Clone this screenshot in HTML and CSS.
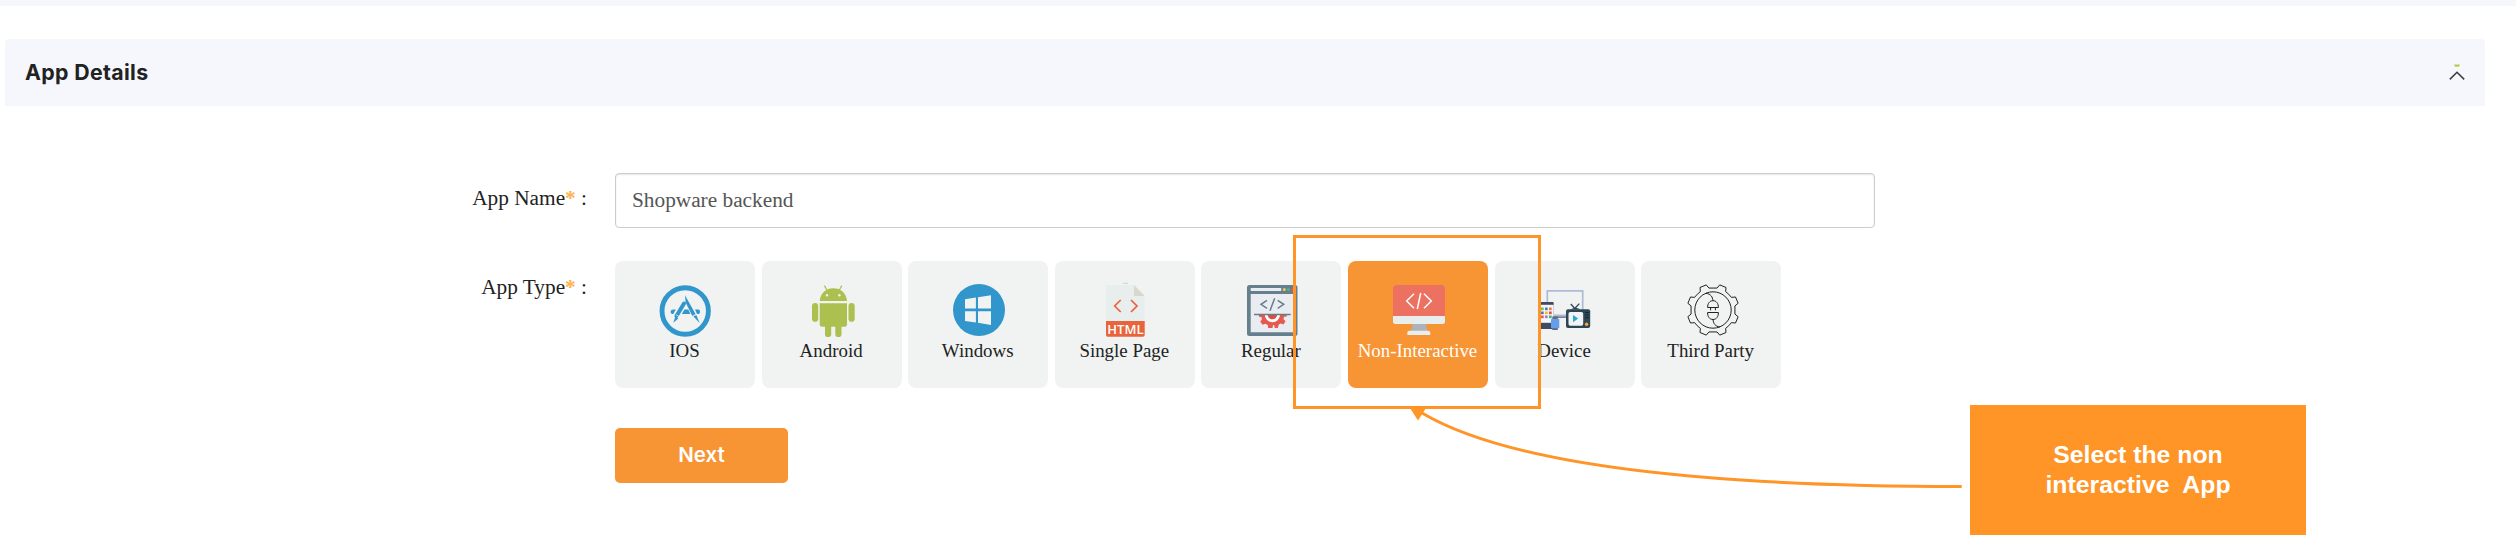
FILE: index.html
```html
<!DOCTYPE html>
<html lang="en">
<head>
<meta charset="utf-8">
<title>App Details</title>
<link rel="stylesheet" href="styles.css">
</head>
<body>
<div class="strip"></div>
<main class="page">
  <header class="panel-head">
    <h1 class="panel-title">App Details</h1>
    <svg class="caret" width="16" height="18" viewBox="0 0 16 18">
      <path d="M5 .6h6l-1 2.200H6z" fill="#b9cb52"/>
      <path d="M.8 15.4 8 8.2l7.2 7.2" fill="none" stroke="#3c3c40" stroke-width="1.5"/>
    </svg>
  </header>

  <form class="form">
    <label class="label label-name" for="name">App Name<span class="req">*</span> :</label>
    <input class="input" id="name" type="text" value="Shopware backend">

    <span class="label label-type">App Type<span class="req">*</span> :</span>
    <div class="types">
      <div class="card">
        <svg class="icon" viewBox="0 0 54 54">
          <circle cx="26.2" cy="27" r="23.2" fill="none" stroke="#3196cc" stroke-width="4.9"/>
          <g stroke="#3196cc" fill="#3196cc">
            <path d="M25 19.5 17.5 32" stroke-width="4" stroke-linecap="round"/>
            <path d="m16.3 32.7 3 1.9-5 4.2z" stroke="none"/>
            <path d="M26 11.2 29.8 18l7 12.5-3.2 2-7-14z" stroke="none"/>
            <path d="m34.5 32.6 2.8-1.7 3.3 8z" stroke="none"/>
            <path d="M25.5 25.5h3.8l2.1 4.5h-8.6z" stroke="none"/>
            <path d="M14.2 25.5h2.6l-2.5 4.5h-1.2c-2.2-1-2-4.5 1.1-4.5zM36 25.5h3.500c2 0 2 4.500 0 4.500H38z" stroke="none"/>
          </g>
          <path d="m17.2 30.800 4 2.500M32.500 32.800l4.500-2.600" stroke="#f0f3f2" stroke-width=".8"/>
        </svg>
        <span class="card-text">IOS</span>
      </div>
      <div class="card">
        <svg class="icon" viewBox="0 0 54 54">
          <g fill="#abc04f">
            <path d="M13.700 17C14.500 9 20 4.300 27.350 4.300S40.200 9 41 17z"/>
            <path d="M13.700 19.300H41v20.900a2.500 2.500 0 0 1-2.500 2.500H16.200a2.500 2.500 0 0 1-2.500-2.500z"/>
            <rect x="6" y="19" width="6.200" height="18.800" rx="3.100"/>
            <rect x="42.500" y="19" width="6.200" height="18.800" rx="3.100"/>
            <rect x="19" y="38" width="6.200" height="15" rx="2.800"/>
            <rect x="29.300" y="38" width="6.200" height="15" rx="2.800"/>
          </g>
          <path d="m18.400 1.600 3 5.400M35.800 1.600l-3 5.400" stroke="#abc04f" stroke-width="1.200"/>
          <circle cx="21" cy="11.300" r="1.200" fill="#f0f3f2"/>
          <circle cx="33.400" cy="11.300" r="1.200" fill="#f0f3f2"/>
        </svg>
        <span class="card-text">Android</span>
      </div>
      <div class="card">
        <svg class="icon" viewBox="0 0 54 54">
          <circle cx="27" cy="26" r="26" fill="#3196cc"/>
          <path d="M13 15.200 23.900 13.600V24.600H13zM26 13.300 39 11.200v13.400H26zM13 27.200h10.900v11.200L13 36.900zM26 27.200h13V41l-13-2.200z" fill="#f0f3f2"/>
        </svg>
        <span class="card-text">Windows</span>
      </div>
      <div class="card">
        <svg class="icon" viewBox="0 0 54 54">
          <path d="M7 1h28l10.700 11v26H7z" fill="#e8eded"/>
          <path d="M35 1v11h10.700z" fill="#d9d8cc"/>
          <path d="M24 -.7h5" stroke="#c3d2da" stroke-width="1"/>
          <path d="M7 37h38.700v14a1.700 1.700 0 0 1-1.700 1.700H8.700A1.700 1.700 0 0 1 7 51z" fill="#e9643a"/>
          <path d="m21.700 16-6 6 6 6M32 16l6 6-6 6" fill="none" stroke="#ea6237" stroke-width="1.700"/>
          <text x="26.400" y="50" class="html-tag">HTML</text>
        </svg>
        <span class="card-text">Single Page</span>
      </div>
      <div class="card">
        <svg class="icon" viewBox="0 0 54 54">
          <rect x="2" y="1" width="50.500" height="51" rx="2.500" fill="#667f8c"/>
          <path d="M5.700 4h30.500v3H5.700zM5.700 10H49v38.300H5.700z" fill="#e9edf2"/>
          <circle cx="39.300" cy="5.500" r="1.500" fill="#f3c954"/>
          <circle cx="43.400" cy="5.500" r="1.500" fill="#4bb594"/>
          <circle cx="47.500" cy="5.500" r="1.500" fill="#e5564d"/>
          <path d="m22 16.300-6 4 6 4M29.700 14.300 25 26.700M32.700 16.300l6 4-6 4" fill="none" stroke="#667f8c" stroke-width="1.500"/>
          <path d="M13.800 30.500v2l3 1v2.200l-1.600 2 2.500 3 2.800-1 2.200 1.400.5 3h4.200l.7-3h1l.7 3h3l1-3.600 2-1 2.700 1 2-3.200-2-2 .5-2.500 2.800-.4v-1.900z" fill="#e5594f"/>
          <path d="M19.700 30.500a7.700 7.700 0 0 0 15.400 0" fill="#fff"/>
          <path d="M22.600 30.500a4.800 4.800 0 0 0 9.600 0" fill="#d94f45"/>
          <path d="M9 30.400h36.700" stroke="#667f8c" stroke-width="1.500"/>
        </svg>
        <span class="card-text">Regular</span>
      </div>
      <div class="card card-active">
        <svg class="icon" viewBox="0 0 54 54">
          <path d="M20.500 39h13.500c0 4 .8 6 2 8H18.500c1.400-2 2-4 2-8z" fill="#acb3ba"/>
          <rect x="1" y="1" width="52" height="39" rx="2.500" fill="#e8edee"/>
          <path d="M1 32V3.500A2.500 2.500 0 0 1 3.500 1h47A2.500 2.500 0 0 1 53 3.500V32z" fill="#ed7161"/>
          <path d="M18 46.700h18a2.300 2.300 0 0 1 2.300 2.300v2h-23v-2a2.300 2.300 0 0 1 2.700-2.300z" fill="#e8edee"/>
          <path d="m22 9.700-7.300 7.300 7.300 7.300M28.700 9l-3.400 16M32 9.700l7.300 7.300-7.300 7.300" fill="none" stroke="#fff" stroke-width="1.500"/>
        </svg>
        <span class="card-text">Non-Interactive</span>
      </div>
      <div class="card">
        <svg class="icon" viewBox="0 0 54 54">
          <path d="M8.300 19V6.800h35.400V26" fill="none" stroke="#aebbd6" stroke-width="1.700"/>
          <path d="M14 30.500h13v3H14z" fill="#b2b9cf"/>
          <path d="M14 32.500h13v1.500H14z" fill="#777f9e"/>
          <rect x="1.200" y="18" width="13.500" height="27" rx="1" fill="#414a63"/>
          <path d="M1.200 20.800h13.500v18H1.200z" fill="#f5f6fa"/>
          <g>
            <path d="M2 23.500h2.700v2.700H2z" fill="#75bd50"/><path d="M6 23.500h2.700v2.700H6z" fill="#3184cc"/><path d="M10 23.500h2.700v2.700H10z" fill="#ef8133"/>
            <path d="M2 27.500h2.700v2.700H2z" fill="#5871b8"/><path d="M6 27.500h2.700v2.700H6z" fill="#eebc29"/><path d="M10 27.500h2.700v2.700H10z" fill="#e64c42"/>
            <path d="M2 31.500h2.700v2.700H2z" fill="#e85b51"/><path d="M6 31.500h2.700v2.700H6z" fill="#9b83bd"/><path d="M10 31.500h2.700v2.700H10z" fill="#45b57f"/>
          </g>
          <path d="M13.300 32.500h5.500V46h-5.500z" fill="#606775"/>
          <rect x="12" y="34.700" width="8.300" height="9.500" rx="1" fill="#669eea"/>
          <path d="m31.800 20 4.500 5M40.300 19.600l-5 5.400" stroke="#2e4654" stroke-width="1.300"/>
          <path d="M32 25.500c1-2 8-2 9 0z" fill="#2e4654"/>
          <rect x="27" y="25.300" width="24.200" height="18.800" rx="2" fill="#2e4654"/>
          <rect x="29.500" y="28" width="14.700" height="13.700" rx="1.800" fill="#f0f4f6"/>
          <path d="m34 31 5.200 3.600L34 38.200z" fill="#29a8d0"/>
          <path d="M46.300 28.500h3.400M46.300 31h3.400M46.300 33.500h3.400" stroke="#17262f" stroke-width="1"/>
          <circle cx="47.600" cy="40.300" r="1.700" fill="#f5a63b"/>
        </svg>
        <span class="card-text">Device</span>
      </div>
      <div class="card">
        <svg class="icon" viewBox="0 0 54 54">
          <g transform="translate(28 26)" fill="none" stroke="#222" stroke-width="1" stroke-linejoin="round">
            <path d="M-4.060-21.930H4.060L6.730-25.110 13-22.520 12.630-18.380Q16-16 18.380-12.630L22.520-13 25.110-6.730 21.930-4.060V4.060L25.110 6.730 22.520 13 18.380 12.630Q16 16 12.630 18.380L13 22.520 6.730 25.110 4.060 21.930H-4.060L-6.730 25.110-13 22.520-12.630 18.380Q-16 16-18.380 12.630L-22.520 13-25.110 6.730-21.930 4.060V-4.060L-25.110-6.730-22.520-13-18.380-12.630Q-16-16-12.630-18.380L-13-22.520-6.730-25.110z"/>
            <circle r="18.200"/>
            <path d="M-5.400-2.500H5.400C5.400-6.500 3.500-9.300 0-9.300S-5.400-6.500-5.400-2.500zM-5.400 2.500H5.400C5.400 6.700 3.500 9.500 0 9.500S-5.400 6.700-5.400 2.500zM-2.400-2.500v2.800M2.400-2.500v2.800M0-9.300C-.5-13-2-16-7-16.700M0 9.500C.5 13.500 2 16.500 7 16.900"/>
          </g>
        </svg>
        <span class="card-text">Third Party</span>
      </div>
    </div>

    <button class="next" type="button">Next</button>
  </form>
</main>

<div class="highlight"></div>
<svg class="arrow" width="570" height="90" viewBox="0 0 570 90">
  <path d="M22 12Q146 85.500 561.700 85.500" fill="none" stroke="#ff9427" stroke-width="3"/>
  <path d="M9 5.500H27L18 19.500z" fill="#ff9427"/>
</svg>
<aside class="callout">Select the non<br>interactive&nbsp; App</aside>
</body>
</html>
```
FILE: styles.css
```css
* {
  box-sizing: border-box;
}

body {
  margin: 0;
  width: 2516px;
  height: 560px;
  position: relative;
  overflow: hidden;
  background: #fff;
  font-family: "Liberation Serif", "Times New Roman", serif;
  color: #222;
}

.strip {
  height: 6px;
  background: #f6f7fd;
}

.page {
  padding: 33px 31px 0 5px;
}

.panel-head {
  display: flex;
  align-items: center;
  justify-content: space-between;
  height: 67px;
  padding: 0 20px;
  border-radius: 4px 4px 0 0;
  background: #f6f7fd;
}

.panel-title {
  margin: 0;
  padding-bottom: 2px;
  font: 650 21.3px/30px Inter, sans-serif;
  letter-spacing: 0.35px;
}

.caret {
  display: block;
}

.form {
  display: grid;
  grid-template-columns: 582px 1260px;
  column-gap: 28px;
  padding-top: 67px;
}

.label {
  font-size: 21.3px;
  line-height: 24px;
  text-align: right;
  white-space: pre;
}

.label-name {
  padding-top: 13px;
}

.label-type {
  padding-top: 47px;
}

.req {
  color: #ffb14e;
  font-weight: 700;
}

.input {
  width: 1260px;
  height: 55px;
  padding: 0 16px;
  border: 1px solid #ccc;
  border-radius: 4px;
  box-shadow: inset 0 1px 2px rgba(0, 0, 0, 0.1);
  background: #fff;
  color: #555;
  font: 21.3px "Liberation Serif", "Times New Roman", serif;
}

.types {
  display: flex;
  gap: 6.6px;
  padding-top: 33px;
}

.card {
  display: flex;
  flex-direction: column;
  align-items: center;
  width: 140px;
  height: 127px;
  padding-top: 23px;
  border-radius: 8px;
  background: #f0f3f2;
}

.card-active {
  background: #f79433;
  color: #fff;
}

.icon {
  display: block;
  width: 54px;
  height: 54px;
  margin-left: 2px;
  overflow: visible;
}

.card-text {
  margin-top: 2px;
  margin-right: 1px;
  font-size: 18.9px;
  line-height: 22px;
  white-space: nowrap;
}

.html-tag {
  font: 600 13px "Open Sans", sans-serif;
  text-anchor: middle;
  fill: #fff;
}

.next {
  grid-column: 2;
  width: 173px;
  height: 55px;
  margin-top: 40px;
  padding: 0 0 2px;
  border: 0;
  border-radius: 5px;
  background: #f79433;
  color: #fff;
  font: 600 20.5px/53px Inter, sans-serif;
}

/* Annotations laid over the form */
.highlight {
  position: absolute;
  left: 1292.5px;
  top: 235px;
  width: 248px;
  height: 174px;
  border: 3px solid #ff9427;
}

.arrow {
  position: absolute;
  left: 1400px;
  top: 401px;
}

.callout {
  position: absolute;
  left: 1970px;
  top: 405px;
  width: 336px;
  height: 130px;
  padding-top: 35px;
  background: #ff9427;
  color: #fff;
  font: bold 24.8px/30px "Liberation Sans", Arial, sans-serif;
  text-align: center;
}
```
